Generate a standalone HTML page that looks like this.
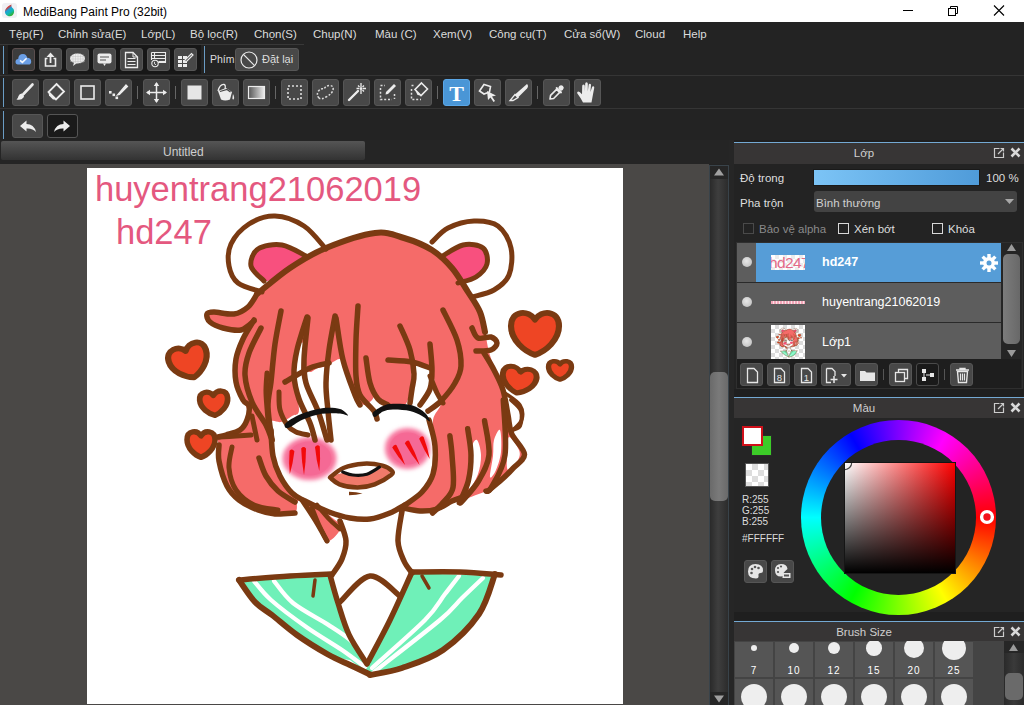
<!DOCTYPE html>
<html><head><meta charset="utf-8">
<style>
*{margin:0;padding:0;box-sizing:border-box}
html,body{width:1024px;height:705px;overflow:hidden;background:#232323;font-family:"Liberation Sans",sans-serif}
.a{position:absolute}
#title{left:0;top:0;width:1024px;height:22px;background:#fff}
#title .t{left:23px;top:5px;font-size:12px;color:#000;white-space:nowrap}
#menu{left:0;top:22px;width:1024px;height:23px;background:#232323}
.mi{top:6px;font-size:11.5px;color:#dcdcdc;white-space:nowrap}
.row{left:0;width:1024px;background:#232323;border-bottom:1px solid #353535}
.bl{left:3px;width:1px;background:#6a9cc4}
.btn{position:absolute;background:#484848;border:1px solid #565656;border-radius:3px}
.btn1{width:23px;height:23px;top:48px}
.btn2{width:27px;height:27px;top:79px}
.sep{position:absolute;width:1px;background:#666}
.txt{position:absolute;white-space:nowrap}
</style></head><body>
<!-- title -->
<div id="title" class="a">
  <div class="a" style="left:2px;top:3px;width:15px;height:15px;background:#f0f0f3;border-radius:3px"></div><svg class="a" style="left:4px;top:4px" width="11" height="13" viewBox="0 0 11 13"><defs><linearGradient id="ic" x1="0" y1="0" x2="0.6" y2="1"><stop offset="0" stop-color="#f08a20"/><stop offset="0.3" stop-color="#e0302a"/><stop offset="0.5" stop-color="#20a0d8"/><stop offset="0.75" stop-color="#10b8b0"/><stop offset="1" stop-color="#30b030"/></linearGradient></defs><path d="M7.5 0.5 Q3 2 1.2 6 Q0 10 4 12 Q9 13 10 8.5 Q10.5 5 8 3.5 Q7 2 7.5 0.5Z" fill="url(#ic)"/></svg>
  <div class="a t">MediBang Paint Pro (32bit)</div>
  <div class="a" style="left:903px;top:10px;width:10px;height:1px;background:#000"></div>
  <svg class="a" style="left:947px;top:5px" width="12" height="11" viewBox="0 0 12 11"><rect x="1.5" y="3.5" width="7" height="7" fill="none" stroke="#000"/><path d="M3.5 3.5V1.5H10.5V8.5H8.5" fill="none" stroke="#000"/></svg>
  <svg class="a" style="left:993px;top:5px" width="12" height="11" viewBox="0 0 12 11"><path d="M1 0.5L11 10.5M11 0.5L1 10.5" stroke="#000" stroke-width="1.1"/></svg>
</div>
<!-- menu -->
<div id="menu" class="a">
  <div class="a mi" style="left:9px">Tệp(F)</div>
  <div class="a mi" style="left:58px">Chỉnh sửa(E)</div>
  <div class="a mi" style="left:141px">Lớp(L)</div>
  <div class="a mi" style="left:190px">Bộ lọc(R)</div>
  <div class="a mi" style="left:254px">Chọn(S)</div>
  <div class="a mi" style="left:313px">Chụp(N)</div>
  <div class="a mi" style="left:375px">Màu (C)</div>
  <div class="a mi" style="left:433px">Xem(V)</div>
  <div class="a mi" style="left:489px">Công cụ(T)</div>
  <div class="a mi" style="left:564px">Cửa sổ(W)</div>
  <div class="a mi" style="left:635px">Cloud</div>
  <div class="a mi" style="left:683px">Help</div>
</div>
<!-- toolbar rows -->
<div class="a row" style="top:45px;height:31px"></div>
<div class="a" style="left:0;top:44px;width:304px;height:1px;background:#383838"></div>
<div class="a row" style="top:76px;height:33px"></div>
<div class="a row" style="top:109px;height:31px;border-bottom:none"></div>
<div class="a bl" style="top:46px;height:28px"></div>
<div class="a bl" style="top:78px;height:29px"></div>
<div class="a bl" style="top:111px;height:28px"></div>

<div class="a" style="left:8px;top:45px;width:193px;height:29px;background:#171717"></div>
<div class="a bl" style="left:204px;top:46px;height:27px"></div>
<div class="btn btn1" style="left:12px;background:#3c3c3c;border-color:#5b4e4e;"><svg class="a" style="left:0;top:0" width="21" height="21" viewBox="0 0 21 21"><path d="M5 15.5 Q2.5 15.5 2.5 12.8 Q2.5 10.3 5.2 10 Q5.5 5 10 5 Q13.5 5 14.2 8.8 Q18 9 18.2 12.4 Q18.3 15.5 15.5 15.5Z" fill="#6b9fe6"/><path d="M7 11.3L9.4 13.4L13.6 9.2" fill="none" stroke="#f2f8ff" stroke-width="1.6"/></svg></div>
<div class="btn btn1" style="left:39px;"><svg class="a" style="left:0;top:0" width="21" height="21" viewBox="0 0 21 21"><path d="M7.5 9.5H5.5V17H15.5V9.5H13.5" fill="none" stroke="#ececec" stroke-width="1.6"/><path d="M10.5 14V5" stroke="#ececec" stroke-width="1.8"/><path d="M6.5 8L10.5 3.5L14.5 8Z" fill="#ececec"/></svg></div>
<div class="btn btn1" style="left:66px;"><svg class="a" style="left:0;top:0" width="21" height="21" viewBox="0 0 21 21"><ellipse cx="10.5" cy="9.5" rx="7.5" ry="5" fill="#ececec"/><path d="M7 13.5L6 17L10 14Z" fill="#ececec"/><path d="M6 5V14M8.5 4.5V14.5M11 4.5V14.5M13.5 4.5V14.5M16 5V14M3 7.5H18M3 10H18M3 12.5H18" stroke="#bbb" stroke-width="0.4"/></svg></div>
<div class="btn btn1" style="left:93px;"><svg class="a" style="left:0;top:0" width="21" height="21" viewBox="0 0 21 21"><rect x="3.5" y="4.5" width="14" height="10" rx="2" fill="#ececec"/><path d="M9 14.5L10.5 17L12 14.5Z" fill="#ececec"/><path d="M6 8H15M6 11H12" stroke="#555" stroke-width="1.2"/></svg></div>
<div class="btn btn1" style="left:120px;"><svg class="a" style="left:0;top:0" width="21" height="21" viewBox="0 0 21 21"><path d="M4.5 3.5H12L16.5 8V18.5H4.5Z" fill="none" stroke="#ececec" stroke-width="1.3"/><path d="M12 3.5V8H16.5" fill="none" stroke="#ececec" stroke-width="1"/><path d="M6.5 9.5H14.5M6.5 12.5H14.5M6.5 15.5H14.5" stroke="#ececec" stroke-width="1"/></svg></div>
<div class="btn btn1" style="left:147px;"><svg class="a" style="left:0;top:0" width="21" height="21" viewBox="0 0 21 21"><path d="M3.5 3.5H17.5V13.5H10M3.5 3.5V11M3.5 6.5H17.5M3.5 9.5H17.5M6.5 3.5V9.5" fill="none" stroke="#ececec" stroke-width="1.1"/><path d="M10.5 12.5H17.5" stroke="#ececec" stroke-width="1.1"/><circle cx="7" cy="14.5" r="3.2" fill="#484848" stroke="#ececec" stroke-width="1.1"/><path d="M6.5 12.8V14.8L8 15.8" fill="none" stroke="#ececec" stroke-width="0.9"/></svg></div>
<div class="btn btn1" style="left:174px;"><svg class="a" style="left:0;top:0" width="21" height="21" viewBox="0 0 21 21"><path d="M3 7H7V10H3ZM8 7H12V10H8ZM3 11H7V14H3ZM8 11H12V14H8ZM3 15H7V18H3ZM8 15H12V18H8Z" fill="#ececec"/><path d="M10 11L16.5 4.5L18 6L11.5 12.5L9.5 13Z" fill="#484848" stroke="#ececec" stroke-width="1.2"/></svg></div>
<div class="a txt" style="left:210px;top:53px;font-size:10.5px;color:#dcdcdc">Phím</div>
<div class="btn" style="left:235px;top:48px;width:64px;height:23px"><svg class="a" style="left:4px;top:1.5px" width="18" height="18" viewBox="0 0 18 18"><circle cx="9" cy="9" r="8" fill="none" stroke="#ececec" stroke-width="1.2"/><path d="M3.4 3.4L14.6 14.6" stroke="#ececec" stroke-width="1.2"/></svg><div class="a txt" style="left:26px;top:4px;font-size:11px;color:#dcdcdc">Đặt lại</div></div>
<div class="btn btn2" style="left:12px;"><svg class="a" style="left:0;top:0" width="25" height="25" viewBox="0 0 25 25"><path d="M19.5 4.5L10.5 14" stroke="#ececec" stroke-width="2.6" stroke-linecap="round"/><path d="M9.5 13.5Q6.5 13 5.5 16Q5 18.5 3.5 19.5Q8.5 20.5 10.5 17.5Q11.5 15.5 9.5 13.5Z" fill="#ececec"/></svg></div>
<div class="btn btn2" style="left:43px;"><svg class="a" style="left:0;top:0" width="25" height="25" viewBox="0 0 25 25"><path d="M12.5 4L20 11.5L12 19.5L4.5 12Z" fill="none" stroke="#ececec" stroke-width="1.8"/><path d="M4.5 12L8.3 15.8L12 19.5L8 17Z" fill="#ececec"/><path d="M4.5 12L12 19.5L9 19.5L5 15.5Z" fill="#ececec"/></svg></div>
<div class="btn btn2" style="left:74px;"><svg class="a" style="left:0;top:0" width="25" height="25" viewBox="0 0 25 25"><rect x="6" y="6" width="13" height="13" fill="none" stroke="#ececec" stroke-width="1.6"/></svg></div>
<div class="btn btn2" style="left:105px;"><svg class="a" style="left:0;top:0" width="25" height="25" viewBox="0 0 25 25"><path d="M20 5L21.5 6.5L13.5 14.5L11.5 15Z" fill="#ececec" stroke="#ececec" stroke-width="1.2"/><rect x="3" y="11" width="2.6" height="2.6" fill="#ececec"/><rect x="6.5" y="13.5" width="2.6" height="2.6" fill="#ececec"/><rect x="9.5" y="16.5" width="2.6" height="2.6" fill="#ececec"/></svg></div>
<div class="btn btn2" style="left:143px;"><svg class="a" style="left:0;top:0" width="25" height="25" viewBox="0 0 25 25"><path d="M12.5 3V22M3 12.5H22" stroke="#ececec" stroke-width="1.5"/><path d="M12.5 2L9.8 6H15.2ZM12.5 23L9.8 19H15.2ZM2 12.5L6 9.8V15.2ZM23 12.5L19 9.8V15.2Z" fill="#ececec"/></svg></div>
<div class="btn btn2" style="left:181px;"><svg class="a" style="left:0;top:0" width="25" height="25" viewBox="0 0 25 25"><rect x="5.5" y="5.5" width="14" height="14" fill="#e6e6e6"/></svg></div>
<div class="btn btn2" style="left:212px;"><svg class="a" style="left:0;top:0" width="25" height="25" viewBox="0 0 25 25"><path d="M5 11L13 8L19 12L17 19.5Q12 21.5 8 19.5Z" fill="#ececec"/><path d="M5 11Q7 4 11 4.5Q13 5 12 9" fill="none" stroke="#ececec" stroke-width="1.3"/><path d="M7 11.5L14 9.5L17.5 12" fill="none" stroke="#444" stroke-width="1.2"/><path d="M20 14Q22 18 20.5 19.5Q19 20 19.5 17Z" fill="#ececec"/></svg></div>
<div class="btn btn2" style="left:243px;"><svg class="a" style="left:0;top:0" width="25" height="25" viewBox="0 0 25 25"><defs><linearGradient id="gg" x1="0" x2="1"><stop offset="0" stop-color="#555"/><stop offset="1" stop-color="#eee"/></linearGradient></defs><rect x="4.5" y="6.5" width="16" height="12" fill="url(#gg)" stroke="#ececec" stroke-width="1.2"/></svg></div>
<div class="btn btn2" style="left:281px;"><svg class="a" style="left:0;top:0" width="25" height="25" viewBox="0 0 25 25"><rect x="6" y="6" width="13" height="13" fill="none" stroke="#dcdcdc" stroke-width="1.6" stroke-dasharray="2 2"/></svg></div>
<div class="btn btn2" style="left:312px;"><svg class="a" style="left:0;top:0" width="25" height="25" viewBox="0 0 25 25"><path d="M6 18Q3 15 5.5 11Q8 8 11 9Q13 5.5 17 5.5Q21 6 20 10Q19 14 13 17Q8 20 6 18Z" fill="none" stroke="#dcdcdc" stroke-width="1.5" stroke-dasharray="2 1.6"/></svg></div>
<div class="btn btn2" style="left:343px;"><svg class="a" style="left:0;top:0" width="25" height="25" viewBox="0 0 25 25"><path d="M5 20L14 11" stroke="#ececec" stroke-width="2.4" stroke-linecap="round"/><path d="M17 3V7M17 10V14M12.5 8.5H15M19 8.5H22M14 5.5L15.5 7M18.5 10L20 11.5M20 5.5L18.5 7" stroke="#ececec" stroke-width="1.3"/><circle cx="17" cy="8.5" r="1.5" fill="#ececec"/></svg></div>
<div class="btn btn2" style="left:374px;"><svg class="a" style="left:0;top:0" width="25" height="25" viewBox="0 0 25 25"><path d="M5.5 8V19.5H17" fill="none" stroke="#dcdcdc" stroke-width="1.5" stroke-dasharray="2 1.8"/><path d="M5.5 5.5H10M19.5 14V19" stroke="#dcdcdc" stroke-width="1.5" stroke-dasharray="2 1.8"/><path d="M19 4L21 6L13 14L10.5 14.5L11 12Z" fill="#ececec"/></svg></div>
<div class="btn btn2" style="left:405px;"><svg class="a" style="left:0;top:0" width="25" height="25" viewBox="0 0 25 25"><path d="M5.5 9V19.5H15" fill="none" stroke="#dcdcdc" stroke-width="1.5" stroke-dasharray="2 1.8"/><path d="M5.5 5.5H8" stroke="#dcdcdc" stroke-width="1.5" stroke-dasharray="2 1.8"/><path d="M15.5 3L21.5 9L15 15.5L9 9.5Z" fill="none" stroke="#ececec" stroke-width="1.6"/><path d="M9 9.5L12 12.5L15 15.5L11.5 15Z" fill="#ececec"/></svg></div>
<div class="btn btn2" style="left:443px;background:#4a96d6;border-color:#5aa6e6;"><svg class="a" style="left:0;top:0" width="25" height="25" viewBox="0 0 25 25"><text x="12.5" y="21" text-anchor="middle" font-family="Liberation Serif" font-weight="bold" font-size="22" fill="#fff">T</text></svg></div>
<div class="btn btn2" style="left:474px;"><svg class="a" style="left:0;top:0" width="25" height="25" viewBox="0 0 25 25"><path d="M4.5 11L9 4.5L15.5 6.5L14.5 12L9 14Z" fill="none" stroke="#ececec" stroke-width="1.6"/><path d="M12 11L21 15.5L17 16.5L20 21L18.5 22L15.5 17.5L13 20Z" fill="#ececec"/></svg></div>
<div class="btn btn2" style="left:505px;"><svg class="a" style="left:0;top:0" width="25" height="25" viewBox="0 0 25 25"><path d="M21 4Q23 6 21 8.5L12 17.5L9 14.5Z" fill="#ececec"/><path d="M9 14.5L12 17.5L7 20.5L4 20.5Z" fill="none" stroke="#ececec" stroke-width="1.3"/></svg></div>
<div class="btn btn2" style="left:543px;"><svg class="a" style="left:0;top:0" width="25" height="25" viewBox="0 0 25 25"><g transform="translate(12,13) rotate(-45)"><path d="M-5.5,-2.2 H3 V2.2 H-5.5 L-8.5,0Z" fill="#444" stroke="#ececec" stroke-width="1.6" stroke-linejoin="round"/><rect x="3" y="-4" width="2" height="8" rx="0.8" fill="#ececec"/><circle cx="7.2" cy="0" r="2.6" fill="#ececec"/></g></svg></div>
<div class="btn btn2" style="left:574px;"><svg class="a" style="left:0;top:0" width="25" height="25" viewBox="0 0 25 25"><path d="M8 22.5 L5.5 18 L2.2 13.2 Q1.8 11.6 3.4 11.6 Q4.8 11.8 7 14.2 L7.2 6 Q7.2 4.4 8.5 4.4 Q9.8 4.4 9.8 6 L9.9 11.5 L10.2 3.8 Q10.2 2.2 11.5 2.2 Q12.8 2.2 12.8 3.8 L12.8 11.5 L13.6 5 Q13.8 3.6 15 3.7 Q16.2 3.9 16 5.3 L15.4 12 L17 7.2 Q17.4 6 18.5 6.3 Q19.6 6.7 19.2 8 L17.6 16.5 L16.5 22.5Z" fill="#ececec"/></svg></div>
<div class="sep" style="left:137px;top:86px;height:13px"></div>
<div class="sep" style="left:175px;top:86px;height:13px"></div>
<div class="sep" style="left:275px;top:86px;height:13px"></div>
<div class="sep" style="left:437px;top:86px;height:13px"></div>
<div class="sep" style="left:537px;top:86px;height:13px"></div>
<div class="btn" style="left:12px;top:114px;width:31px;height:24px"><svg class="a" style="left:0;top:0" width="29" height="22" viewBox="0 0 29 22"><path d="M7 11L13.5 5.5V9Q21 9 23 17Q19.5 13 13.5 13.5V16.5Z" fill="#ececec"/></svg></div>
<div class="btn" style="left:47px;top:114px;width:31px;height:24px;background:#1a1a1a;border-color:#555"><svg class="a" style="left:0;top:0" width="29" height="22" viewBox="0 0 29 22"><path d="M22 11L15.5 5.5V9Q8 9 6 17Q9.5 13 15.5 13.5V16.5Z" fill="#ececec"/></svg></div>
<!-- canvas area -->
<div class="a" style="left:0;top:140px;width:734px;height:24px;background:#252525"></div>
<div class="a" style="left:1px;top:141px;width:364px;height:19px;background:linear-gradient(#555,#333);border-radius:2px"></div>
<div class="a txt" style="left:163px;top:145px;font-size:12px;color:#cfcfcf">Untitled</div>
<div class="a" style="left:0;top:164px;width:709px;height:541px;background:#4a4846"></div>
<div class="a" style="left:87px;top:168px;width:536px;height:536px;background:#fff;overflow:hidden" id="cv">
<!--DRAW-->
<svg class="a" style="left:0;top:0" width="536" height="536" viewBox="87 168 536 536"><defs><filter id="bl" x="-50%" y="-50%" width="200%" height="200%"><feGaussianBlur stdDeviation="2.2"/></filter></defs><text x="95" y="201" font-family="Liberation Sans" font-size="34.5" fill="#e4587f">huyentrang21062019</text><text x="116" y="243.5" font-family="Liberation Sans" font-size="34.5" fill="#e4587f">hd247</text><g id="drw"><path d="M306.0,256.0 C305.5,251.5 290.0,246.2 282.0,245.0 C274.0,243.8 263.2,245.5 258.0,249.0 C252.8,252.5 250.0,260.7 251.0,266.0 C252.0,271.3 258.3,280.0 264.0,281.0 C269.7,282.0 278.0,276.2 285.0,272.0 C292.0,267.8 306.5,260.5 306.0,256.0Z" fill="#f8507e"/><path d="M441.0,257.0 C443.2,252.8 456.0,246.5 463.0,245.0 C470.0,243.5 479.0,244.8 483.0,248.0 C487.0,251.2 488.2,259.2 487.0,264.0 C485.8,268.8 480.8,273.8 476.0,277.0 C471.2,280.2 462.3,284.2 458.0,283.0 C453.7,281.8 452.8,274.3 450.0,270.0 C447.2,265.7 438.8,261.2 441.0,257.0Z" fill="#f8507e"/><path d="M262.0,293.0 C267.5,288.7 279.3,275.5 290.0,268.0 C300.7,260.5 311.8,253.8 326.0,248.0 C340.2,242.2 362.0,234.7 375.0,233.0 C388.0,231.3 394.5,235.2 404.0,238.0 C413.5,240.8 424.0,245.0 432.0,250.0 C440.0,255.0 446.0,261.0 452.0,268.0 C458.0,275.0 463.3,284.7 468.0,292.0 C472.7,299.3 477.2,305.3 480.0,312.0 C482.8,318.7 483.5,325.3 485.0,332.0 C486.5,338.7 487.2,345.3 489.0,352.0 C490.8,358.7 493.7,365.3 496.0,372.0 C498.3,378.7 501.0,384.8 503.0,392.0 C505.0,399.2 506.7,408.2 508.0,415.0 C509.3,421.8 508.3,426.5 511.0,433.0 C513.7,439.5 523.7,448.2 524.0,454.0 C524.3,459.8 516.8,463.7 513.0,468.0 C509.2,472.3 505.2,476.3 501.0,480.0 C496.8,483.7 494.5,486.7 488.0,490.0 C481.5,493.3 469.2,497.7 462.0,500.0 C454.8,502.3 450.0,502.5 445.0,504.0 C440.0,505.5 437.3,508.0 432.0,509.0 C426.7,510.0 418.3,510.7 413.0,510.0 C407.7,509.3 407.0,505.0 400.0,505.0 C393.0,505.0 382.7,510.0 371.0,510.0 C359.3,510.0 341.8,506.7 330.0,505.0 C318.2,503.3 305.8,498.8 300.0,500.0 C294.2,501.2 299.2,509.8 295.0,512.0 C290.8,514.2 281.2,513.3 275.0,513.0 C268.8,512.7 264.0,512.2 258.0,510.0 C252.0,507.8 244.2,504.0 239.0,500.0 C233.8,496.0 230.3,492.5 227.0,486.0 C223.7,479.5 220.3,467.8 219.0,461.0 C217.7,454.2 219.2,449.0 219.0,445.0 C218.8,441.0 215.3,439.0 218.0,437.0 C220.7,435.0 230.0,436.0 235.0,433.0 C240.0,430.0 246.5,424.5 248.0,419.0 C249.5,413.5 245.8,406.2 244.0,400.0 C242.2,393.8 238.3,388.7 237.0,382.0 C235.7,375.3 235.0,367.2 236.0,360.0 C237.0,352.8 240.0,345.7 243.0,339.0 C246.0,332.3 254.5,321.5 254.0,320.0 C253.5,318.5 245.3,328.8 240.0,330.0 C234.7,331.2 227.3,329.0 222.0,327.0 C216.7,325.0 209.3,320.7 208.0,318.0 C206.7,315.3 209.7,311.7 214.0,311.0 C218.3,310.3 228.3,314.7 234.0,314.0 C239.7,313.3 244.2,310.3 248.0,307.0 C251.8,303.7 254.7,296.3 257.0,294.0 C259.3,291.7 256.5,297.3 262.0,293.0Z" fill="#f56b69"/><path d="M272.0,440.0 C271.7,434.5 269.5,425.0 271.0,422.0 C272.5,419.0 277.5,423.0 281.0,422.0 C284.5,421.0 289.0,418.0 292.0,416.0 C295.0,414.0 298.7,416.3 299.0,410.0 C299.3,403.7 294.3,388.0 294.0,378.0 C293.7,368.0 295.5,355.8 297.0,350.0 C298.5,344.2 301.5,340.5 303.0,343.0 C304.5,345.5 304.8,360.2 306.0,365.0 C307.2,369.8 308.0,371.5 310.0,372.0 C312.0,372.5 315.0,369.0 318.0,368.0 C321.0,367.0 325.5,367.0 328.0,366.0 C330.5,365.0 330.7,363.0 333.0,362.0 C335.3,361.0 339.3,357.3 342.0,360.0 C344.7,362.7 346.7,372.2 349.0,378.0 C351.3,383.8 353.5,390.5 356.0,395.0 C358.5,399.5 361.3,404.2 364.0,405.0 C366.7,405.8 370.0,401.8 372.0,400.0 C374.0,398.2 374.3,393.7 376.0,394.0 C377.7,394.3 379.7,400.0 382.0,402.0 C384.3,404.0 386.2,405.5 390.0,406.0 C393.8,406.5 401.5,408.3 405.0,405.0 C408.5,401.7 409.7,392.3 411.0,386.0 C412.3,379.7 410.7,370.2 413.0,367.0 C415.3,363.8 421.8,366.2 425.0,367.0 C428.2,367.8 430.0,367.8 432.0,372.0 C434.0,376.2 435.5,386.7 437.0,392.0 C438.5,397.3 441.7,399.3 441.0,404.0 C440.3,408.7 434.0,413.0 433.0,420.0 C432.0,427.0 435.0,437.0 435.0,446.0 C435.0,455.0 435.2,466.3 433.0,474.0 C430.8,481.7 426.7,486.8 422.0,492.0 C417.3,497.2 413.5,500.7 405.0,505.0 C396.5,509.3 380.2,515.8 371.0,518.0 C361.8,520.2 357.0,519.2 350.0,518.0 C343.0,516.8 336.5,513.8 329.0,511.0 C321.5,508.2 311.2,504.0 305.0,501.0 C298.8,498.0 296.2,497.2 292.0,493.0 C287.8,488.8 283.2,482.3 280.0,476.0 C276.8,469.7 274.3,461.0 273.0,455.0 C271.7,449.0 272.3,445.5 272.0,440.0Z" fill="#fff"/><path d="M472.0,447.0 C473.0,442.0 475.5,438.7 477.0,440.0 C478.5,441.3 480.8,449.3 481.0,455.0 C481.2,460.7 480.0,468.3 478.0,474.0 C476.0,479.7 470.2,489.7 469.0,489.0 C467.8,488.3 470.5,477.0 471.0,470.0 C471.5,463.0 471.0,452.0 472.0,447.0Z" fill="#fff"/><path d="M494.0,440.0 C495.2,435.7 498.8,428.0 500.0,430.0 C501.2,432.0 501.7,445.3 501.0,452.0 C500.3,458.7 497.8,465.8 496.0,470.0 C494.2,474.2 490.5,479.3 490.0,477.0 C489.5,474.7 492.3,462.2 493.0,456.0 C493.7,449.8 492.8,444.3 494.0,440.0Z" fill="#fff"/><path d="M509.0,437.0 C511.0,436.2 517.5,446.2 519.0,450.0 C520.5,453.8 519.8,456.7 518.0,460.0 C516.2,463.3 509.8,470.8 508.0,470.0 C506.2,469.2 506.8,460.5 507.0,455.0 C507.2,449.5 507.0,437.8 509.0,437.0Z" fill="#fff"/><path d="M302.0,500.0 C302.7,497.5 313.3,502.3 318.0,505.0 C322.7,507.7 326.2,512.3 330.0,516.0 C333.8,519.7 341.5,522.8 341.0,527.0 C340.5,531.2 331.5,542.2 327.0,541.0 C322.5,539.8 318.2,526.8 314.0,520.0 C309.8,513.2 301.3,502.5 302.0,500.0Z" fill="#f56b69"/><path d="M240,581 L331,575 L338,603 L349,634.6 L367,662 L412,573 L494,576 C490,595 482,610 479,614 C465,632 455,642 443,650 C430,658 415,664 402,668 L370,673 C362,668 355,664 350,660 C340,659 330,655 328,654 C310,643 300,637 297,635 C285,626 275,618 270,613 C260,604 248,592 240,581Z" fill="#6ff0b8"/><path d="M254.0,581.0 C256.8,584.2 262.2,592.2 271.0,600.0 C279.8,607.8 295.2,619.2 307.0,627.5 C318.8,635.8 332.3,643.4 342.0,650.0 C351.7,656.6 361.2,664.2 365.0,667.0" fill="none" stroke="#fff" stroke-width="4.3" stroke-linecap="round" stroke-linejoin="round"/><path d="M274.0,581.0 C277.2,584.7 284.0,595.7 293.0,603.0 C302.0,610.3 318.7,618.6 328.0,624.6 C337.3,630.6 343.1,634.1 349.0,639.0 C354.9,643.9 361.1,651.5 363.5,654.0" fill="none" stroke="#fff" stroke-width="4.3" stroke-linecap="round" stroke-linejoin="round"/><path d="M459.0,576.0 C456.7,579.0 450.7,586.7 445.0,594.0 C439.3,601.3 437.2,607.7 425.0,620.0 C412.8,632.3 380.8,660.0 372.0,668.0" fill="none" stroke="#fff" stroke-width="4.3" stroke-linecap="round" stroke-linejoin="round"/><path d="M483.0,578.0 C479.5,581.3 469.2,591.0 462.0,598.0 C454.8,605.0 454.7,607.7 440.0,620.0 C425.3,632.3 385.0,663.3 374.0,672.0" fill="none" stroke="#fff" stroke-width="4.3" stroke-linecap="round" stroke-linejoin="round"/><g filter="url(#bl)"><ellipse cx="309.5" cy="458.6" rx="27" ry="21.5" fill="#f7739c"/><ellipse cx="407.5" cy="448.4" rx="22.5" ry="20.5" fill="#f7739c"/></g><ellipse cx="309.5" cy="458.6" rx="22" ry="17" fill="#f4608e" opacity="0.5"/><ellipse cx="407.5" cy="448.4" rx="18" ry="16" fill="#f4608e" opacity="0.5"/><path d="M326.0,249.0 C322.3,245.2 312.5,231.5 304.0,226.0 C295.5,220.5 284.2,216.3 275.0,216.0 C265.8,215.7 256.3,219.3 249.0,224.0 C241.7,228.7 234.3,237.0 231.0,244.0 C227.7,251.0 227.8,259.5 229.0,266.0 C230.2,272.5 232.5,278.7 238.0,283.0 C243.5,287.3 258.0,290.5 262.0,292.0" fill="none" stroke="#7a3a12" stroke-width="5" stroke-linecap="round" stroke-linejoin="round"/><path d="M306.0,256.0 C302.0,254.2 290.0,246.2 282.0,245.0 C274.0,243.8 263.2,245.5 258.0,249.0 C252.8,252.5 250.0,260.7 251.0,266.0 C252.0,271.3 261.8,278.5 264.0,281.0" fill="none" stroke="#7a3a12" stroke-width="5" stroke-linecap="round" stroke-linejoin="round"/><path d="M432.0,242.0 C434.7,239.7 441.0,231.5 448.0,228.0 C455.0,224.5 465.7,221.3 474.0,221.0 C482.3,220.7 491.8,221.5 498.0,226.0 C504.2,230.5 509.2,239.8 511.0,248.0 C512.8,256.2 511.8,268.0 509.0,275.0 C506.2,282.0 500.2,286.3 494.0,290.0 C487.8,293.7 475.7,295.8 472.0,297.0" fill="none" stroke="#7a3a12" stroke-width="5" stroke-linecap="round" stroke-linejoin="round"/><path d="M441.0,257.0 C444.7,255.0 456.0,246.5 463.0,245.0 C470.0,243.5 479.0,244.8 483.0,248.0 C487.0,251.2 488.2,259.2 487.0,264.0 C485.8,268.8 480.8,273.8 476.0,277.0 C471.2,280.2 461.0,282.0 458.0,283.0" fill="none" stroke="#7a3a12" stroke-width="5" stroke-linecap="round" stroke-linejoin="round"/><path d="M257.0,294.0 C262.5,289.7 278.5,275.7 290.0,268.0 C301.5,260.3 311.8,253.8 326.0,248.0 C340.2,242.2 362.0,234.7 375.0,233.0 C388.0,231.3 394.5,235.2 404.0,238.0 C413.5,240.8 424.0,245.0 432.0,250.0 C440.0,255.0 446.0,261.0 452.0,268.0 C458.0,275.0 463.3,284.7 468.0,292.0 C472.7,299.3 477.2,305.3 480.0,312.0 C482.8,318.7 484.2,328.7 485.0,332.0" fill="none" stroke="#7a3a12" stroke-width="6" stroke-linecap="round" stroke-linejoin="round"/><path d="M472.0,328.0 C473.0,329.7 474.8,336.5 478.0,338.0 C481.2,339.5 487.8,336.2 491.0,337.0 C494.2,337.8 497.0,340.8 497.0,343.0 C497.0,345.2 494.5,348.7 491.0,350.0 C487.5,351.3 478.5,350.8 476.0,351.0" fill="none" stroke="#7a3a12" stroke-width="5.5" stroke-linecap="round" stroke-linejoin="round"/><path d="M484.0,353.0 C485.7,355.8 490.8,363.8 494.0,370.0 C497.2,376.2 500.7,382.5 503.0,390.0 C505.3,397.5 506.6,407.7 508.0,415.0 C509.4,422.3 508.9,427.2 511.7,433.8 C514.5,440.4 524.3,448.6 524.5,454.3 C524.7,460.1 516.8,464.1 513.0,468.3 C509.2,472.6 505.7,476.0 501.5,479.8 C497.3,483.6 490.2,489.1 488.0,491.0" fill="none" stroke="#7a3a12" stroke-width="5.5" stroke-linecap="round" stroke-linejoin="round"/><path d="M505.0,393.0 C507.5,395.0 517.2,400.7 520.0,405.0 C522.8,409.3 523.2,414.8 522.0,419.0 C520.8,423.2 514.5,428.2 513.0,430.0" fill="none" stroke="#7a3a12" stroke-width="3.5" stroke-linecap="round" stroke-linejoin="round"/><path d="M429.0,420.0 C430.0,424.3 434.3,437.0 435.0,446.0 C435.7,455.0 435.2,466.3 433.0,474.0 C430.8,481.7 426.7,486.8 422.0,492.0 C417.3,497.2 408.7,502.2 405.0,505.0 C401.3,507.8 400.8,508.3 400.0,509.0" fill="none" stroke="#7a3a12" stroke-width="5.5" stroke-linecap="round" stroke-linejoin="round"/><path d="M449.9,435.7 C450.2,438.9 451.5,446.4 452.0,455.0 C452.5,463.6 454.5,479.5 453.0,487.5 C451.5,495.5 446.2,498.6 442.8,502.8 C439.4,507.1 434.3,511.3 432.6,513.0" fill="none" stroke="#7a3a12" stroke-width="5.5" stroke-linecap="round" stroke-linejoin="round"/><path d="M467.7,428.8 C468.2,433.2 470.9,446.3 471.0,455.0 C471.1,463.7 470.2,473.0 468.3,481.0 C466.4,489.0 460.9,499.2 459.4,502.8" fill="none" stroke="#7a3a12" stroke-width="5.5" stroke-linecap="round" stroke-linejoin="round"/><path d="M484.6,420.8 C485.3,426.5 490.0,445.0 489.0,455.0 C488.0,465.0 483.2,473.0 478.5,481.0 C473.8,489.0 463.7,499.2 460.7,502.8" fill="none" stroke="#7a3a12" stroke-width="5.5" stroke-linecap="round" stroke-linejoin="round"/><path d="M503.3,400.0 C503.6,409.2 507.0,440.4 505.0,455.0 C503.0,469.6 494.5,481.5 491.3,487.5 C488.1,493.5 486.9,490.4 486.0,491.0" fill="none" stroke="#7a3a12" stroke-width="5.5" stroke-linecap="round" stroke-linejoin="round"/><path d="M511.0,400.0 C512.7,401.8 519.5,406.7 521.0,411.0 C522.5,415.3 521.5,422.8 520.0,426.0 C518.5,429.2 513.3,429.3 512.0,430.0" fill="none" stroke="#7a3a12" stroke-width="4" stroke-linecap="round" stroke-linejoin="round"/><path d="M403.0,508.0 C405.8,508.5 414.3,510.8 420.0,511.0 C425.7,511.2 431.7,510.7 437.0,509.0 C442.3,507.3 447.7,503.0 452.0,501.0 C456.3,499.0 461.2,497.7 463.0,497.0" fill="none" stroke="#7a3a12" stroke-width="5.5" stroke-linecap="round" stroke-linejoin="round"/><path d="M257.0,294.0 C255.5,296.2 251.8,303.7 248.0,307.0 C244.2,310.3 239.7,313.2 234.0,314.0 C228.3,314.8 218.5,312.0 214.0,312.0 C209.5,312.0 207.7,312.3 207.0,314.0 C206.3,315.7 207.3,319.7 210.0,322.0 C212.7,324.3 217.8,326.7 223.0,328.0 C228.2,329.3 235.8,331.2 241.0,330.0 C246.2,328.8 251.8,322.5 254.0,321.0" fill="none" stroke="#7a3a12" stroke-width="5.5" stroke-linecap="round" stroke-linejoin="round"/><path d="M254.0,320.0 C252.2,323.2 246.0,332.5 243.0,339.0 C240.0,345.5 237.2,351.8 236.0,359.0 C234.8,366.2 234.8,375.2 236.0,382.0 C237.2,388.8 240.8,396.0 243.0,400.0 C245.2,404.0 248.3,402.7 249.0,406.0 C249.7,409.3 248.5,416.0 247.0,420.0 C245.5,424.0 243.5,427.5 240.0,430.0 C236.5,432.5 229.7,433.8 226.0,435.0 C222.3,436.2 219.3,436.7 218.0,437.0" fill="none" stroke="#7a3a12" stroke-width="5.5" stroke-linecap="round" stroke-linejoin="round"/><path d="M219.0,437.0 C221.8,436.8 230.7,436.3 236.0,436.0 C241.3,435.7 248.5,435.2 251.0,435.0" fill="none" stroke="#7a3a12" stroke-width="5" stroke-linecap="round" stroke-linejoin="round"/><path d="M261.0,328.0 C259.0,332.2 251.7,345.2 249.0,353.0 C246.3,360.8 244.5,366.8 245.0,375.0 C245.5,383.2 248.5,393.7 252.0,402.0 C255.5,410.3 262.7,418.7 266.0,425.0 C269.3,431.3 271.0,437.5 272.0,440.0" fill="none" stroke="#7a3a12" stroke-width="5.5" stroke-linecap="round" stroke-linejoin="round"/><path d="M252.0,416.0 C252.8,420.0 256.2,436.0 257.0,440.0" fill="none" stroke="#7a3a12" stroke-width="5" stroke-linecap="round" stroke-linejoin="round"/><path d="M219.0,445.0 C219.0,447.7 217.7,454.2 219.0,461.0 C220.3,467.8 223.7,479.5 227.0,486.0 C230.3,492.5 233.8,496.0 239.0,500.0 C244.2,504.0 252.0,507.7 258.0,510.0 C264.0,512.3 268.8,513.5 275.0,514.0 C281.2,514.5 291.7,513.2 295.0,513.0" fill="none" stroke="#7a3a12" stroke-width="5.5" stroke-linecap="round" stroke-linejoin="round"/><path d="M232.0,447.0 C231.5,450.5 228.3,460.8 229.0,468.0 C229.7,475.2 231.8,483.8 236.0,490.0 C240.2,496.2 247.0,501.7 254.0,505.0 C261.0,508.3 274.0,509.2 278.0,510.0" fill="none" stroke="#7a3a12" stroke-width="5" stroke-linecap="round" stroke-linejoin="round"/><path d="M259.0,458.0 C260.2,461.0 262.8,470.5 266.0,476.0 C269.2,481.5 273.2,486.7 278.0,491.0 C282.8,495.3 292.2,500.2 295.0,502.0" fill="none" stroke="#7a3a12" stroke-width="5.5" stroke-linecap="round" stroke-linejoin="round"/><path d="M302.0,500.0 C304.2,503.3 310.8,513.2 315.0,520.0 C319.2,526.8 325.0,537.5 327.0,541.0" fill="none" stroke="#7a3a12" stroke-width="5" stroke-linecap="round" stroke-linejoin="round"/><path d="M312.0,508.0 C313.2,510.8 316.5,519.5 319.0,525.0 C321.5,530.5 325.7,538.3 327.0,541.0" fill="none" stroke="#7a3a12" stroke-width="4.5" stroke-linecap="round" stroke-linejoin="round"/><path d="M317.0,505.0 C319.0,507.3 325.2,515.0 329.0,519.0 C332.8,523.0 338.2,527.3 340.0,529.0" fill="none" stroke="#7a3a12" stroke-width="4.5" stroke-linecap="round" stroke-linejoin="round"/><path d="M271.0,430.0 C271.3,434.3 271.5,448.3 273.0,456.0 C274.5,463.7 276.8,469.8 280.0,476.0 C283.2,482.2 287.8,488.8 292.0,493.0 C296.2,497.2 298.8,497.8 305.0,501.0 C311.2,504.2 321.5,509.2 329.0,512.0 C336.5,514.8 343.2,516.8 350.0,518.0 C356.8,519.2 363.3,519.8 370.0,519.0 C376.7,518.2 384.2,515.3 390.0,513.0 C395.8,510.7 402.5,506.3 405.0,505.0" fill="none" stroke="#7a3a12" stroke-width="5.5" stroke-linecap="round" stroke-linejoin="round"/><path d="M281.0,311.0 C280.0,316.5 276.7,332.2 275.0,344.0 C273.3,355.8 272.2,371.5 271.0,382.0 C269.8,392.5 267.8,397.3 268.0,407.0 C268.2,416.7 271.3,434.5 272.0,440.0" fill="none" stroke="#7a3a12" stroke-width="5.5" stroke-linecap="round" stroke-linejoin="round"/><path d="M279.0,392.0 C279.2,395.0 278.5,404.3 280.0,410.0 C281.5,415.7 285.3,422.3 288.0,426.0 C290.7,429.7 292.7,430.5 296.0,432.0 C299.3,433.5 306.0,434.5 308.0,435.0" fill="none" stroke="#7a3a12" stroke-width="5" stroke-linecap="round" stroke-linejoin="round"/><path d="M267.0,373.0 C266.8,376.3 265.8,385.2 266.0,393.0 C266.2,400.8 267.7,415.5 268.0,420.0" fill="none" stroke="#7a3a12" stroke-width="5" stroke-linecap="round" stroke-linejoin="round"/><path d="M307.0,317.0 C305.3,322.5 299.2,340.3 297.0,350.0 C294.8,359.7 293.7,366.8 294.0,375.0 C294.3,383.2 296.3,391.0 299.0,399.0 C301.7,407.0 307.3,416.2 310.0,423.0 C312.7,429.8 314.2,437.2 315.0,440.0" fill="none" stroke="#7a3a12" stroke-width="5.5" stroke-linecap="round" stroke-linejoin="round"/><path d="M308.0,318.0 C307.3,325.0 304.3,349.2 304.0,360.0 C303.7,370.8 303.7,374.5 306.0,383.0 C308.3,391.5 314.5,401.5 318.0,411.0 C321.5,420.5 325.5,435.2 327.0,440.0" fill="none" stroke="#7a3a12" stroke-width="5.5" stroke-linecap="round" stroke-linejoin="round"/><path d="M335.0,316.0 C334.0,321.7 330.5,338.8 329.0,350.0 C327.5,361.2 326.2,372.8 326.0,383.0 C325.8,393.2 327.2,401.5 328.0,411.0 C328.8,420.5 330.5,435.2 331.0,440.0" fill="none" stroke="#7a3a12" stroke-width="5.5" stroke-linecap="round" stroke-linejoin="round"/><path d="M336.0,318.0 C337.2,325.0 339.8,347.2 343.0,360.0 C346.2,372.8 352.2,387.5 355.0,395.0 C357.8,402.5 359.2,403.3 360.0,405.0" fill="none" stroke="#7a3a12" stroke-width="5.5" stroke-linecap="round" stroke-linejoin="round"/><path d="M285.0,382.0 C289.2,379.7 302.7,371.2 310.0,368.0 C317.3,364.8 325.8,363.8 329.0,363.0" fill="none" stroke="#7a3a12" stroke-width="5.5" stroke-linecap="round" stroke-linejoin="round"/><path d="M358.0,306.0 C357.7,311.7 356.3,328.3 356.0,340.0 C355.7,351.7 355.3,366.8 356.0,376.0 C356.7,385.2 357.0,389.2 360.0,395.0 C363.0,400.8 371.2,407.0 374.0,411.0 C376.8,415.0 376.5,417.7 377.0,419.0" fill="none" stroke="#7a3a12" stroke-width="5.5" stroke-linecap="round" stroke-linejoin="round"/><path d="M366.0,358.0 C366.7,362.2 368.0,376.2 370.0,383.0 C372.0,389.8 375.0,395.3 378.0,399.0 C381.0,402.7 386.3,404.0 388.0,405.0" fill="none" stroke="#7a3a12" stroke-width="5.5" stroke-linecap="round" stroke-linejoin="round"/><path d="M400.0,326.0 C401.7,330.0 407.7,342.0 410.0,350.0 C412.3,358.0 413.7,367.5 414.0,374.0 C414.3,380.5 412.7,384.2 412.0,389.0 C411.3,393.8 410.3,400.7 410.0,403.0" fill="none" stroke="#7a3a12" stroke-width="5.5" stroke-linecap="round" stroke-linejoin="round"/><path d="M430.0,344.0 C430.3,348.3 432.0,362.5 432.0,370.0 C432.0,377.5 432.0,383.2 430.0,389.0 C428.0,394.8 421.7,402.3 420.0,405.0" fill="none" stroke="#7a3a12" stroke-width="5.5" stroke-linecap="round" stroke-linejoin="round"/><path d="M443.0,310.0 C445.3,315.0 454.0,330.7 457.0,340.0 C460.0,349.3 461.3,358.8 461.0,366.0 C460.7,373.2 458.3,377.2 455.0,383.0 C451.7,388.8 445.5,396.3 441.0,401.0 C436.5,405.7 430.2,409.3 428.0,411.0" fill="none" stroke="#7a3a12" stroke-width="5.5" stroke-linecap="round" stroke-linejoin="round"/><path d="M388.0,360.0 C392.0,360.3 405.0,360.7 412.0,362.0 C419.0,363.3 427.0,367.0 430.0,368.0" fill="none" stroke="#7a3a12" stroke-width="5.5" stroke-linecap="round" stroke-linejoin="round"/><path d="M430.0,376.0 C431.2,378.8 434.8,388.5 437.0,393.0 C439.2,397.5 442.0,401.3 443.0,403.0" fill="none" stroke="#7a3a12" stroke-width="5" stroke-linecap="round" stroke-linejoin="round"/><path d="M340.0,521.0 C341.0,524.3 345.7,534.7 346.0,541.0 C346.3,547.3 344.3,553.3 342.0,559.0 C339.7,564.7 333.7,572.3 332.0,575.0" fill="none" stroke="#7a3a12" stroke-width="5.5" stroke-linecap="round" stroke-linejoin="round"/><path d="M402.0,511.0 C401.3,516.0 397.7,532.7 398.0,541.0 C398.3,549.3 401.7,555.7 404.0,561.0 C406.3,566.3 410.7,571.0 412.0,573.0" fill="none" stroke="#7a3a12" stroke-width="5.5" stroke-linecap="round" stroke-linejoin="round"/><path d="M239.0,580.0 C247.5,579.3 274.7,577.0 290.0,576.0 C305.3,575.0 324.2,574.3 331.0,574.0" fill="none" stroke="#7a3a12" stroke-width="5.5" stroke-linecap="round" stroke-linejoin="round"/><path d="M412.0,572.0 C420.0,572.0 445.2,571.5 460.0,572.0 C474.8,572.5 494.2,574.5 501.0,575.0" fill="none" stroke="#7a3a12" stroke-width="5.5" stroke-linecap="round" stroke-linejoin="round"/><path d="M239.0,580.0 C241.7,583.7 249.5,596.2 255.0,602.0 C260.5,607.8 265.0,609.5 272.0,615.0 C279.0,620.5 287.7,628.4 297.0,635.0 C306.3,641.6 319.2,649.5 328.0,654.5 C336.8,659.5 343.2,661.8 350.0,665.0 C356.8,668.2 365.8,672.5 369.0,674.0" fill="none" stroke="#7a3a12" stroke-width="6" stroke-linecap="round" stroke-linejoin="round"/><path d="M370.0,675.0 C375.3,673.8 389.8,672.2 402.0,668.0 C414.2,663.8 430.2,659.0 443.0,650.0 C455.8,641.0 470.3,626.7 479.0,614.0 C487.7,601.3 492.3,580.7 495.0,574.0" fill="none" stroke="#7a3a12" stroke-width="6" stroke-linecap="round" stroke-linejoin="round"/><path d="M330.0,575.0 C331.3,579.7 334.8,593.1 338.0,603.0 C341.2,612.9 344.2,624.4 349.0,634.6 C353.8,644.8 364.0,659.1 367.0,664.0" fill="none" stroke="#7a3a12" stroke-width="5.5" stroke-linecap="round" stroke-linejoin="round"/><path d="M412.0,572.0 C408.3,580.0 397.3,605.0 390.0,620.0 C382.7,635.0 371.7,655.0 368.0,662.0" fill="none" stroke="#7a3a12" stroke-width="5.5" stroke-linecap="round" stroke-linejoin="round"/><path d="M340.0,602.0 C345.0,597.7 360.0,577.0 370.0,576.0 C380.0,575.0 395.0,592.7 400.0,596.0" fill="none" stroke="#7a3a12" stroke-width="5.5" stroke-linecap="round" stroke-linejoin="round"/><path d="M315.0,580.0 C314.7,582.7 313.3,593.3 313.0,596.0" fill="none" stroke="#7a3a12" stroke-width="3.5" stroke-linecap="round" stroke-linejoin="round"/><path d="M422.0,576.0 C423.2,578.0 427.8,586.0 429.0,588.0" fill="none" stroke="#7a3a12" stroke-width="3.5" stroke-linecap="round" stroke-linejoin="round"/><path d="M285.5,423.5 C287.5,421.2 293.9,417.1 300.0,414.5 C306.1,411.9 315.3,409.1 322.0,408.2 C328.7,407.3 335.7,407.8 340.0,409.0 C344.3,410.2 348.0,414.8 348.0,415.5 C348.0,416.2 344.3,413.8 340.0,413.5 C335.7,413.2 328.2,412.8 322.0,413.8 C315.8,414.8 308.7,417.1 303.0,419.5 C297.3,421.9 290.9,427.3 288.0,428.0 C285.1,428.7 283.5,425.8 285.5,423.5Z" fill="#111"/><path d="M373.0,412.5 C374.3,410.7 379.7,407.4 383.0,406.0 C386.3,404.6 388.2,403.9 393.0,403.8 C397.8,403.7 406.7,403.8 412.0,405.3 C417.3,406.8 422.0,410.3 425.0,413.0 C428.0,415.7 430.5,421.0 430.0,421.5 C429.5,422.0 425.3,417.8 422.0,416.0 C418.7,414.2 414.8,412.1 410.0,411.0 C405.2,409.9 397.5,409.4 393.0,409.5 C388.5,409.6 386.0,410.2 383.0,411.5 C380.0,412.8 376.7,416.8 375.0,417.0 C373.3,417.2 371.7,414.3 373.0,412.5Z" fill="#111"/><path d="M289.6,450.8 Q292.0,448.1 294.4,451.2 Q292.9,463.9 289.8,474.0 Q288.6,463.4 289.6,450.8Z" fill="#f20a0a"/><path d="M301.2,448.5 Q303.6,445.6 306.0,448.5 Q306.0,463.0 304.0,475.0 Q301.7,463.1 301.2,448.5Z" fill="#f20a0a"/><path d="M315.0,446.9 Q317.4,443.8 319.8,446.5 Q320.6,459.9 319.3,471.0 Q316.3,460.2 315.0,446.9Z" fill="#f20a0a"/><path d="M392.2,447.4 Q394.3,443.7 396.4,445.0 Q402.1,455.5 405.1,465.0 Q398.4,457.6 392.2,447.4Z" fill="#f20a0a"/><path d="M404.8,443.2 Q406.9,439.5 409.0,440.8 Q415.8,453.6 419.6,465.0 Q412.0,455.7 404.8,443.2Z" fill="#f20a0a"/><path d="M419.2,438.7 Q421.4,435.1 423.6,436.9 Q428.0,448.7 429.8,459.0 Q424.0,450.3 419.2,438.7Z" fill="#f20a0a"/><path d="M330.0,478.0 C330.7,476.2 339.2,473.4 343.0,473.0 C346.8,472.6 349.0,475.2 353.0,475.5 C357.0,475.8 362.5,475.8 367.0,474.5 C371.5,473.2 376.0,468.1 380.0,467.5 C384.0,466.9 391.8,468.2 391.0,471.0 C390.2,473.8 380.7,481.2 375.0,484.0 C369.3,486.8 363.0,487.5 357.0,487.5 C351.0,487.5 343.5,485.6 339.0,484.0 C334.5,482.4 329.3,479.8 330.0,478.0Z" fill="#f07a6a"/><path d="M330.0,477.5 C332.2,475.9 337.8,470.3 343.4,468.0 C349.0,465.7 357.2,464.1 363.7,463.7 C370.2,463.3 377.9,464.5 382.5,465.6 C387.1,466.7 390.1,468.9 391.5,470.5 C392.9,472.1 393.8,472.7 391.0,475.0 C388.2,477.3 380.3,482.3 374.7,484.4 C369.1,486.5 363.4,487.5 357.5,487.5 C351.6,487.5 344.1,486.1 339.5,484.4 C334.9,482.7 331.6,478.6 330.0,477.5" fill="none" stroke="#7a3a12" stroke-width="4.5" stroke-linecap="round" stroke-linejoin="round"/><path d="M342.7,472.0 C344.4,472.5 348.8,474.6 352.8,475.0 C356.8,475.4 362.5,475.5 366.9,474.2 C371.3,472.9 377.3,468.4 379.4,467.2" fill="none" stroke="#111" stroke-width="3.2" stroke-linecap="round" stroke-linejoin="round"/><path d="M349.0,495.2 Q349.0,493.5 349.0,491.8 Q356.4,491.9 362.5,493.4 Q356.4,495.0 349.0,495.2Z" fill="#7a3a12"/><g transform="translate(535,333) rotate(0) scale(24,23)"><path d="M0,-0.58 C-0.25,-1.02 -1,-1.0 -1,-0.3 C-1,0.3 -0.45,0.8 0,0.95 C0.45,0.8 1,0.3 1,-0.3 C1,-1.0 0.25,-1.02 0,-0.58Z" fill="#ee4524" stroke="#7a3a12" stroke-width="0.2553191489361702" stroke-linejoin="round"/></g><g transform="translate(189,361) rotate(-18) scale(19.5,18)"><path d="M0,-0.58 C-0.25,-1.02 -1,-1.0 -1,-0.3 C-1,0.3 -0.45,0.8 0,0.95 C0.45,0.8 1,0.3 1,-0.3 C1,-1.0 0.25,-1.02 0,-0.58Z" fill="#ee4524" stroke="#7a3a12" stroke-width="0.32" stroke-linejoin="round"/></g><g transform="translate(214,403) rotate(-5) scale(14,13)"><path d="M0,-0.58 C-0.25,-1.02 -1,-1.0 -1,-0.3 C-1,0.3 -0.45,0.8 0,0.95 C0.45,0.8 1,0.3 1,-0.3 C1,-1.0 0.25,-1.02 0,-0.58Z" fill="#ee4524" stroke="#7a3a12" stroke-width="0.4074074074074074" stroke-linejoin="round"/></g><g transform="translate(201,444) rotate(0) scale(14,14)"><path d="M0,-0.58 C-0.25,-1.02 -1,-1.0 -1,-0.3 C-1,0.3 -0.45,0.8 0,0.95 C0.45,0.8 1,0.3 1,-0.3 C1,-1.0 0.25,-1.02 0,-0.58Z" fill="#ee4524" stroke="#7a3a12" stroke-width="0.39285714285714285" stroke-linejoin="round"/></g><g transform="translate(519,380) rotate(10) scale(17,14)"><path d="M0,-0.58 C-0.25,-1.02 -1,-1.0 -1,-0.3 C-1,0.3 -0.45,0.8 0,0.95 C0.45,0.8 1,0.3 1,-0.3 C1,-1.0 0.25,-1.02 0,-0.58Z" fill="#ee4524" stroke="#7a3a12" stroke-width="0.3548387096774194" stroke-linejoin="round"/></g><g transform="translate(560,370) rotate(0) scale(11.5,10)"><path d="M0,-0.58 C-0.25,-1.02 -1,-1.0 -1,-0.3 C-1,0.3 -0.45,0.8 0,0.95 C0.45,0.8 1,0.3 1,-0.3 C1,-1.0 0.25,-1.02 0,-0.58Z" fill="#ee4524" stroke="#7a3a12" stroke-width="0.46511627906976744" stroke-linejoin="round"/></g></g></svg>
<!--/DRAW-->
</div>
<!-- canvas scrollbar -->
<div class="a" style="left:709px;top:165px;width:20px;height:540px;background:linear-gradient(90deg,#2a2a2a,#3e3e3e 45%,#2c2c2c);border:1px solid #39434a"></div>
<div class="a" style="left:710px;top:166px;width:18px;height:13px;background:#262626"></div>
<svg class="a" style="left:714px;top:168px" width="10" height="8" viewBox="0 0 10 8"><path d="M0 7.5H10L5 0.5Z" fill="#a0a0a0"/></svg>
<div class="a" style="left:710px;top:692px;width:18px;height:13px;background:#262626"></div>
<svg class="a" style="left:714px;top:695px" width="10" height="8" viewBox="0 0 10 8"><path d="M0 0.5H10L5 7.5Z" fill="#a0a0a0"/></svg>
<div class="a" style="left:710px;top:372px;width:18px;height:129px;background:linear-gradient(90deg,#6a6a6a,#7a7a7a 50%,#6a6a6a);border-radius:5px"></div>

<!-- right panel -->
<div class="a" style="left:729px;top:140px;width:295px;height:565px;background:#262626"></div>
<div class="a" style="left:734px;top:140px;width:290px;height:565px;background:#1f1f1f"></div>
<div class="a" style="left:734px;top:142px;width:290px;height:1px;background:#74a9d3"></div>
<div class="a" style="left:734px;top:143px;width:290px;height:21px;background:#373535"></div>
<div class="a txt" style="left:734px;top:147px;width:260px;text-align:center;font-size:11.5px;color:#cfcfcf">Lớp</div>
<svg class="a" style="left:993px;top:147px" width="12" height="12" viewBox="0 0 12 12"><path d="M6.5 1.5H1.5V10.5H10.5V5.5" fill="none" stroke="#ccc" stroke-width="1.2"/><path d="M5 7L10.5 1.5M7.5 1.5H10.5V4.5" fill="none" stroke="#ccc" stroke-width="1.2"/></svg>
<svg class="a" style="left:1010px;top:147px" width="11" height="11" viewBox="0 0 11 11"><path d="M1.5 1.5L9.5 9.5M9.5 1.5L1.5 9.5" stroke="#d8d8d8" stroke-width="2.6"/></svg>
<div class="a" style="left:734px;top:164px;width:290px;height:225px;background:#232323"></div>
<div class="a txt" style="left:740px;top:172px;font-size:11.5px;color:#dedede">Độ trong</div>
<div class="a" style="left:813px;top:169px;width:167px;height:17px;background:#1a1a1a"></div>
<div class="a" style="left:814px;top:170px;width:165px;height:15px;background:linear-gradient(90deg,#7cc4f6,#4f9bd9)"></div>
<div class="a txt" style="left:986px;top:172px;font-size:11.5px;color:#dedede">100 %</div>
<div class="a txt" style="left:740px;top:197px;font-size:11.5px;color:#dedede">Pha trộn</div>
<div class="a" style="left:814px;top:191px;width:203px;height:21px;background:#434343;border-radius:3px"></div>
<div class="a txt" style="left:816px;top:197px;font-size:11.5px;color:#d0d0d0">Bình thường</div>
<svg class="a" style="left:1005px;top:199px" width="10" height="6" viewBox="0 0 10 6"><path d="M0 0H9L4.5 5Z" fill="#a8a8a8"/></svg>
<div class="a" style="left:743px;top:223px;width:11px;height:11px;border:1px solid #4a4a4a"></div>
<div class="a txt" style="left:759px;top:223px;font-size:11.5px;color:#8a8a8a">Bảo vệ alpha</div>
<div class="a" style="left:838px;top:223px;width:11px;height:11px;border:1px solid #d8d8d8"></div>
<div class="a txt" style="left:854px;top:223px;font-size:11.5px;color:#dedede">Xén bớt</div>
<div class="a" style="left:932px;top:223px;width:11px;height:11px;border:1px solid #d8d8d8"></div>
<div class="a txt" style="left:948px;top:223px;font-size:11.5px;color:#dedede">Khóa</div>
<div class="a" style="left:736px;top:242px;width:287px;height:147px;background:#262626;border:1px solid #2f2f2f"></div>
<div class="a" style="left:737px;top:243px;width:264px;height:116px;background:#2a2a2a;overflow:hidden"><div class="a" style="left:0;top:0px;width:264px;height:39px;background:#5d5d5d"></div><div class="a" style="left:19px;top:0px;width:245px;height:39px;background:#569dd7"></div><div class="a" style="left:5px;top:14px;width:10px;height:10px;border-radius:50%;background:radial-gradient(circle at 45% 40%,#e8e8e8,#b8b8b8)"></div><div class="a txt" style="left:85px;top:12px;font-size:12.5px;color:#fff;font-weight:bold">hd247</div><div class="a" style="left:0;top:40px;width:264px;height:39px;background:#5d5d5d"></div><div class="a" style="left:5px;top:54px;width:10px;height:10px;border-radius:50%;background:radial-gradient(circle at 45% 40%,#e8e8e8,#b8b8b8)"></div><div class="a txt" style="left:85px;top:52px;font-size:12.5px;color:#fff;font-weight:normal">huyentrang21062019</div><div class="a" style="left:0;top:80px;width:264px;height:39px;background:#5d5d5d"></div><div class="a" style="left:5px;top:94px;width:10px;height:10px;border-radius:50%;background:radial-gradient(circle at 45% 40%,#e8e8e8,#b8b8b8)"></div><div class="a txt" style="left:85px;top:92px;font-size:12.5px;color:#fff;font-weight:normal">Lớp1</div></div>
<div class="a" style="left:771px;top:255px;width:34px;height:15px;background-color:#fff;background-image:linear-gradient(45deg,#ececec 25%,transparent 25%,transparent 75%,#ececec 75%),linear-gradient(45deg,#ececec 25%,transparent 25%,transparent 75%,#ececec 75%);background-size:8px 8px;background-position:0 0,4px 4px;overflow:hidden"><div class="a txt" style="left:-2px;top:-1px;font-size:15.5px;color:#e46a88;letter-spacing:-0.6px">hd247</div></div>
<div class="a" style="left:771px;top:301px;width:34px;height:3px;background:repeating-linear-gradient(90deg,#f2a6b8 0 2px,#fbe0e6 2px 3px)"></div>
<div class="a" style="left:771px;top:325px;width:34px;height:34px;background-color:#fff;background-image:linear-gradient(45deg,#dcdcdc 25%,transparent 25%,transparent 75%,#dcdcdc 75%),linear-gradient(45deg,#dcdcdc 25%,transparent 25%,transparent 75%,#dcdcdc 75%);background-size:8px 8px;background-position:0 0,4px 4px;overflow:hidden"><svg class="a" style="left:0;top:0" width="34" height="34" viewBox="87 168 536 536"><use href="#drw"/></svg></div>
<svg class="a" style="left:979px;top:253px" width="20" height="20" viewBox="0 0 20 20"><g fill="#fff"><circle cx="10" cy="10" r="6"/><rect x="8.3" y="1" width="3.4" height="5" transform="rotate(0 10 10)"/><rect x="8.3" y="1" width="3.4" height="5" transform="rotate(45 10 10)"/><rect x="8.3" y="1" width="3.4" height="5" transform="rotate(90 10 10)"/><rect x="8.3" y="1" width="3.4" height="5" transform="rotate(135 10 10)"/><rect x="8.3" y="1" width="3.4" height="5" transform="rotate(180 10 10)"/><rect x="8.3" y="1" width="3.4" height="5" transform="rotate(225 10 10)"/><rect x="8.3" y="1" width="3.4" height="5" transform="rotate(270 10 10)"/><rect x="8.3" y="1" width="3.4" height="5" transform="rotate(315 10 10)"/></g><circle cx="10" cy="10" r="2.5" fill="#569dd7"/></svg>
<div class="a" style="left:1002px;top:243px;width:19px;height:116px;background:#252525"></div>
<svg class="a" style="left:1007px;top:244px" width="10" height="8" viewBox="0 0 10 8"><path d="M0 7H9L4.5 0Z" fill="#9a9a9a"/></svg>
<div class="a" style="left:1003px;top:254px;width:17px;height:90px;background:linear-gradient(90deg,#7c7c7c,#686868);border-radius:5px"></div>
<svg class="a" style="left:1007px;top:350px" width="10" height="8" viewBox="0 0 10 8"><path d="M0 0H9L4.5 7Z" fill="#9a9a9a"/></svg>
<div class="a" style="left:737px;top:359px;width:284px;height:29px;background:#1e1e1e"></div>
<div class="btn" style="left:740px;top:363px;width:23px;height:23px;"><svg class="a" style="left:0;top:0" width="21" height="21" viewBox="0 0 21 21"><path d="M6.5 4.5H13L16.5 8V18.5H6.5Z" fill="none" stroke="#e6e6e6" stroke-width="1.3"/></svg></div>
<div class="btn" style="left:767px;top:363px;width:23px;height:23px;"><svg class="a" style="left:0;top:0" width="21" height="21" viewBox="0 0 21 21"><path d="M6.5 4.5H13L16.5 8V18.5H6.5Z" fill="none" stroke="#e6e6e6" stroke-width="1.3"/><text x="11.5" y="16.5" text-anchor="middle" font-size="9.5" fill="#e6e6e6" font-family="Liberation Sans">8</text></svg></div>
<div class="btn" style="left:794px;top:363px;width:23px;height:23px;"><svg class="a" style="left:0;top:0" width="21" height="21" viewBox="0 0 21 21"><path d="M6.5 4.5H13L16.5 8V18.5H6.5Z" fill="none" stroke="#e6e6e6" stroke-width="1.3"/><text x="11.5" y="16.5" text-anchor="middle" font-size="9.5" fill="#e6e6e6" font-family="Liberation Sans">1</text></svg></div>
<div class="btn" style="left:821px;top:363px;width:30px;height:23px;"><svg class="a" style="left:0;top:0" width="28" height="21" viewBox="0 0 28 21"><path d="M4.5 4.5H10L13 7.5V12M9 18.5H4.5V4.5" fill="none" stroke="#e6e6e6" stroke-width="1.3"/><path d="M12 12V19M8.5 15.5H15.5" stroke="#e6e6e6" stroke-width="1.5"/><path d="M19 10H25L22 13.5Z" fill="#e6e6e6"/></svg></div>
<div class="btn" style="left:855px;top:363px;width:23px;height:23px;"><svg class="a" style="left:0;top:0" width="21" height="21" viewBox="0 0 21 21"><path d="M4 7H9L10.5 8.5H19V17H4Z" fill="#e6e6e6"/></svg></div>
<div class="btn" style="left:889px;top:363px;width:23px;height:23px;"><svg class="a" style="left:0;top:0" width="21" height="21" viewBox="0 0 21 21"><rect x="5.5" y="8.5" width="9" height="9" fill="none" stroke="#e6e6e6" stroke-width="1.3"/><path d="M8.5 8.5V5.5H17.5V14.5H14.5" fill="none" stroke="#e6e6e6" stroke-width="1.3"/></svg></div>
<div class="btn" style="left:916px;top:363px;width:23px;height:23px;background:#1a1a1a;border-color:#4a4a4a;"><svg class="a" style="left:0;top:0" width="21" height="21" viewBox="0 0 21 21"><path d="M5 5H9V9H5ZM5 13H9V17H5ZM13 9H17V13H13Z" fill="#e6e6e6"/><path d="M7 9V13M9 11H13" stroke="#e6e6e6" stroke-width="1"/></svg></div>
<div class="btn" style="left:950px;top:363px;width:23px;height:23px;"><svg class="a" style="left:0;top:0" width="21" height="21" viewBox="0 0 21 21"><path d="M5 6H18M9 6V4.5H14V6" fill="none" stroke="#e6e6e6" stroke-width="1.4"/><path d="M6.5 7.5H16.5L15.5 18.5H7.5Z" fill="none" stroke="#e6e6e6" stroke-width="1.4"/><path d="M9.5 9.5V16.5M11.5 9.5V16.5M13.5 9.5V16.5" stroke="#e6e6e6" stroke-width="1.2"/></svg></div>
<div class="sep" style="left:883px;top:369px;height:11px;background:#555"></div>
<div class="sep" style="left:944px;top:369px;height:11px;background:#555"></div>
<div class="a" style="left:734px;top:397px;width:290px;height:1px;background:#74a9d3"></div>
<div class="a" style="left:734px;top:398px;width:290px;height:20px;background:#373535"></div>
<div class="a txt" style="left:734px;top:402px;width:260px;text-align:center;font-size:11.5px;color:#cfcfcf">Màu</div>
<svg class="a" style="left:993px;top:402px" width="12" height="12" viewBox="0 0 12 12"><path d="M6.5 1.5H1.5V10.5H10.5V5.5" fill="none" stroke="#ccc" stroke-width="1.2"/><path d="M5 7L10.5 1.5M7.5 1.5H10.5V4.5" fill="none" stroke="#ccc" stroke-width="1.2"/></svg>
<svg class="a" style="left:1010px;top:402px" width="11" height="11" viewBox="0 0 11 11"><path d="M1.5 1.5L9.5 9.5M9.5 1.5L1.5 9.5" stroke="#d8d8d8" stroke-width="2.6"/></svg>
<div class="a" style="left:734px;top:418px;width:290px;height:194px;background:#252525"></div>
<div class="a" style="left:751px;top:435px;width:21px;height:21px;background:#3ccc28;border:1px solid #2a2a2a"></div>
<div class="a" style="left:742px;top:426px;width:21px;height:20px;background:#fff;border:2px solid #d0101a"></div>
<div class="a" style="left:745px;top:463px;width:24px;height:24px;background:#fff;background-image:linear-gradient(45deg,#ddd 25%,transparent 25%,transparent 75%,#ddd 75%),linear-gradient(45deg,#ddd 25%,transparent 25%,transparent 75%,#ddd 75%);background-size:12px 12px;background-position:0 0,6px 6px;border:1px solid #555"></div>
<div class="a txt" style="left:742px;top:494px;font-size:10px;line-height:11px;color:#dcdcdc">R:255<br>G:255<br>B:255</div>
<div class="a txt" style="left:742px;top:533px;font-size:10px;color:#dcdcdc">#FFFFFF</div>
<div class="btn" style="left:744px;top:560px;width:23px;height:23px"><svg class="a" style="left:0;top:0" width="21" height="21" viewBox="0 0 21 21"><path d="M10.5 3Q18 3 18 9.5Q18 12 15.5 12Q13 12 13.5 14.5Q14 17.5 11 17.5Q3 17.5 3 10.5Q3 3 10.5 3Z" fill="#e6e6e6"/><circle cx="7" cy="8" r="1.3" fill="#555"/><circle cx="10" cy="6" r="1.3" fill="#555"/><circle cx="13.5" cy="7" r="1.3" fill="#555"/><circle cx="6.5" cy="12" r="1.3" fill="#555"/></svg></div>
<div class="btn" style="left:771px;top:560px;width:23px;height:23px"><svg class="a" style="left:0;top:0" width="21" height="21" viewBox="0 0 21 21"><path d="M9 3Q15 3 15.5 8Q13 10 11.5 12Q12 15.5 9 15.5Q3 15.5 3 9.5Q3 3 9 3Z" fill="#e6e6e6"/><circle cx="6" cy="7" r="1.1" fill="#555"/><circle cx="9" cy="5.5" r="1.1" fill="#555"/><circle cx="6" cy="11" r="1.1" fill="#555"/><rect x="10.5" y="12" width="8" height="5" fill="#e6e6e6"/><rect x="12" y="13.5" width="5" height="2" fill="#555"/></svg></div>
<div class="a" style="left:801px;top:420px;width:195px;height:195px;border-radius:50%;background:conic-gradient(from 90deg,#f00,#ff0,#0f0,#0ff,#00f,#f0f,#f00)"></div>
<div class="a" style="left:821px;top:440px;width:155px;height:155px;border-radius:50%;background:#232323"></div>
<div class="a" style="left:844px;top:462px;width:112px;height:112px;background:#151515"></div>
<div class="a" style="left:845px;top:463px;width:110px;height:110px;background:linear-gradient(transparent,#000),linear-gradient(90deg,#fff,#f00);overflow:hidden"><svg class="a" style="left:-8px;top:-8px" width="16" height="16" viewBox="0 0 16 16"><circle cx="8" cy="8" r="6.5" fill="none" stroke="#444" stroke-width="1.4"/><circle cx="8" cy="8" r="5.3" fill="none" stroke="#f4f4f4" stroke-width="1"/></svg></div>
<svg class="a" style="left:978px;top:508px" width="18" height="18" viewBox="0 0 18 18"><circle cx="9" cy="9" r="5.4" fill="#f3101a" stroke="#fff" stroke-width="3.4"/></svg>
<div class="a" style="left:734px;top:621px;width:290px;height:1px;background:#74a9d3"></div>
<div class="a" style="left:734px;top:622px;width:290px;height:19px;background:#373535"></div>
<div class="a txt" style="left:734px;top:626px;width:260px;text-align:center;font-size:11.5px;color:#cfcfcf">Brush Size</div>
<svg class="a" style="left:993px;top:626px" width="12" height="12" viewBox="0 0 12 12"><path d="M6.5 1.5H1.5V10.5H10.5V5.5" fill="none" stroke="#ccc" stroke-width="1.2"/><path d="M5 7L10.5 1.5M7.5 1.5H10.5V4.5" fill="none" stroke="#ccc" stroke-width="1.2"/></svg>
<svg class="a" style="left:1010px;top:626px" width="11" height="11" viewBox="0 0 11 11"><path d="M1.5 1.5L9.5 9.5M9.5 1.5L1.5 9.5" stroke="#d8d8d8" stroke-width="2.6"/></svg>
<div class="a" style="left:734px;top:641px;width:270px;height:64px;background:#444;overflow:hidden"><div class="a" style="left:1px;top:1px;width:38px;height:35px;background:#555"></div><div class="a" style="left:16.75px;top:3.75px;width:6.5px;height:6.5px;border-radius:50%;background:#eee"></div><div class="a txt" style="left:1px;top:24px;width:38px;text-align:center;font-size:10px;color:#fff;letter-spacing:1px">7</div><div class="a" style="left:1px;top:38px;width:38px;height:30px;background:#555"></div><div class="a" style="left:7px;top:43px;width:26px;height:26px;border-radius:50%;background:#eee"></div><div class="a" style="left:41px;top:1px;width:38px;height:35px;background:#555"></div><div class="a" style="left:55.0px;top:2.0px;width:10px;height:10px;border-radius:50%;background:#eee"></div><div class="a txt" style="left:41px;top:24px;width:38px;text-align:center;font-size:10px;color:#fff;letter-spacing:1px">10</div><div class="a" style="left:41px;top:38px;width:38px;height:30px;background:#555"></div><div class="a" style="left:47px;top:43px;width:26px;height:26px;border-radius:50%;background:#eee"></div><div class="a" style="left:81px;top:1px;width:38px;height:35px;background:#555"></div><div class="a" style="left:93.75px;top:0.75px;width:12.5px;height:12.5px;border-radius:50%;background:#eee"></div><div class="a txt" style="left:81px;top:24px;width:38px;text-align:center;font-size:10px;color:#fff;letter-spacing:1px">12</div><div class="a" style="left:81px;top:38px;width:38px;height:30px;background:#555"></div><div class="a" style="left:87px;top:43px;width:26px;height:26px;border-radius:50%;background:#eee"></div><div class="a" style="left:121px;top:1px;width:38px;height:35px;background:#555"></div><div class="a" style="left:132.25px;top:-0.75px;width:15.5px;height:15.5px;border-radius:50%;background:#eee"></div><div class="a txt" style="left:121px;top:24px;width:38px;text-align:center;font-size:10px;color:#fff;letter-spacing:1px">15</div><div class="a" style="left:121px;top:38px;width:38px;height:30px;background:#555"></div><div class="a" style="left:127px;top:43px;width:26px;height:26px;border-radius:50%;background:#eee"></div><div class="a" style="left:161px;top:1px;width:38px;height:35px;background:#555"></div><div class="a" style="left:170.0px;top:-3.0px;width:20px;height:20px;border-radius:50%;background:#eee"></div><div class="a txt" style="left:161px;top:24px;width:38px;text-align:center;font-size:10px;color:#fff;letter-spacing:1px">20</div><div class="a" style="left:161px;top:38px;width:38px;height:30px;background:#555"></div><div class="a" style="left:167px;top:43px;width:26px;height:26px;border-radius:50%;background:#eee"></div><div class="a" style="left:201px;top:1px;width:38px;height:35px;background:#555"></div><div class="a" style="left:208.0px;top:-5.0px;width:24px;height:24px;border-radius:50%;background:#eee"></div><div class="a txt" style="left:201px;top:24px;width:38px;text-align:center;font-size:10px;color:#fff;letter-spacing:1px">25</div><div class="a" style="left:201px;top:38px;width:38px;height:30px;background:#555"></div><div class="a" style="left:207px;top:43px;width:26px;height:26px;border-radius:50%;background:#eee"></div></div>
<div class="a" style="left:1004px;top:641px;width:20px;height:64px;background:linear-gradient(90deg,#2a2a2a,#3a3a3a,#2a2a2a)"></div>
<div class="a" style="left:1004px;top:641px;width:20px;height:12px;background:#262626"></div>
<svg class="a" style="left:1009px;top:644px" width="10" height="8" viewBox="0 0 10 8"><path d="M0 7H9L4.5 0Z" fill="#9a9a9a"/></svg>
<div class="a" style="left:1005px;top:673px;width:18px;height:27px;background:#6a6a6a;border-radius:5px"></div>

</body></html>
